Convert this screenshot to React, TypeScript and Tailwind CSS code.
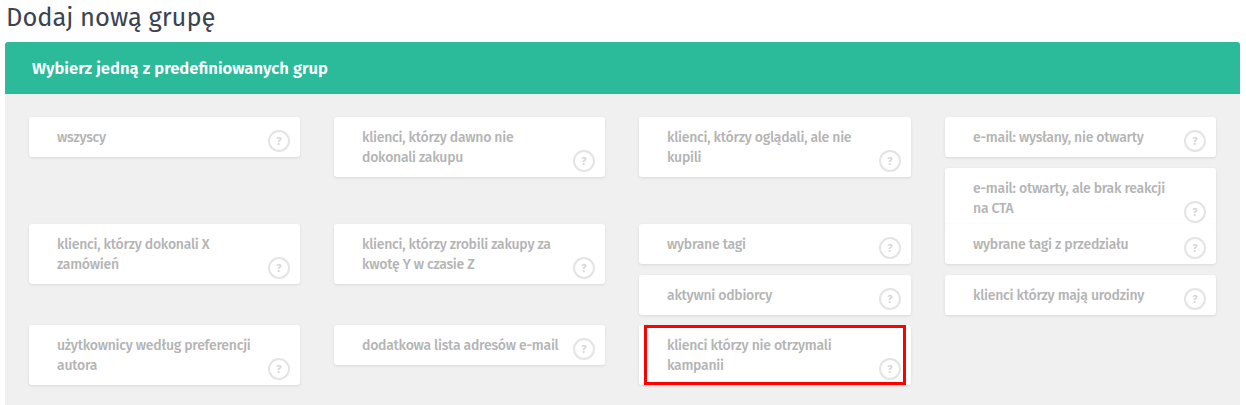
import React from 'react';

interface Card {
  label: string;
  gap?: string;
  marked?: boolean;
}

const columns: Card[][] = [
  [
    { label: 'wszyscy' },
    { label: 'klienci, którzy dokonali X zamówień', gap: 'mt-[67px]' },
    { label: 'użytkownicy według preferencji autora', gap: 'mt-[41px]' },
  ],
  [
    { label: 'klienci, którzy dawno nie dokonali zakupu' },
    { label: 'klienci, którzy zrobili zakupy za kwotę Y w czasie Z', gap: 'mt-[47px]' },
    { label: 'dodatkowa lista adresów e-mail', gap: 'mt-[41px]' },
  ],
  [
    { label: 'klienci, którzy oglądali, ale nie kupili' },
    { label: 'wybrane tagi', gap: 'mt-[47px]' },
    { label: 'aktywni odbiorcy', gap: 'mt-[11px]' },
    { label: 'klienci którzy nie otrzymali kampanii', gap: 'mt-[10px]', marked: true },
  ],
  [
    { label: 'e-mail: wysłany, nie otwarty' },
    { label: 'e-mail: otwarty, ale brak reakcji na CTA', gap: 'mt-[11px]' },
    { label: 'wybrane tagi z przedziału', gap: '-mt-[4px]' },
    { label: 'klienci którzy mają urodziny', gap: 'mt-[11px]' },
  ],
];

const GroupCard: React.FC<{ card: Card }> = ({ card }) => (
  <div className={`relative rounded-[3px] bg-white pl-7 pr-10 pt-[11px] pb-[9px] text-[14px] font-medium leading-[20px] tracking-[-0.25px] text-[#b4b4b4] shadow-[0_1px_3px_rgba(0,0,0,0.1)] ${card.gap || ''}`}>
    {card.label}
    <span className="absolute bottom-[5px] right-[10px] flex h-[22px] w-[22px] items-center justify-center rounded-full border-2 border-[#e4e4e4] text-[11px] font-bold leading-none tracking-normal text-[#d6d6d6]">
      ?
    </span>
    {card.marked && (
      <div className="absolute inset-y-0 left-[5px] right-[5px] border-[3px] border-[#ff0000]" />
    )}
  </div>
);

export default function App() {
  return (
    <div className="h-[405px] overflow-hidden bg-white pl-[5px] pr-[6px] font-['Fira_Sans','Noto_Sans',sans-serif]">
      <h1 className="h-[42px] pl-px pt-[2px] text-[25.5px] font-normal leading-[32px] text-[#3a4352]">Dodaj nową grupę</h1>
      <div className="overflow-hidden rounded-t-[3px] bg-[#f0f0f0]">
        <div className="flex h-[52px] items-center bg-[#2bbb9b] pl-[27px] text-[16.6px] font-semibold text-white">
          Wybierz jedną z predefiniowanych grup
        </div>
        <div className="grid h-[311px] grid-cols-[271px_271px_272px_271px] gap-x-[34px] pl-6 pr-6 pt-[23px]">
          {columns.map((column, i) => (
            <div key={i} className="flex flex-col items-stretch">
              {column.map((card) => (
                <GroupCard key={card.label} card={card} />
              ))}
            </div>
          ))}
        </div>
      </div>
    </div>
  );
}
